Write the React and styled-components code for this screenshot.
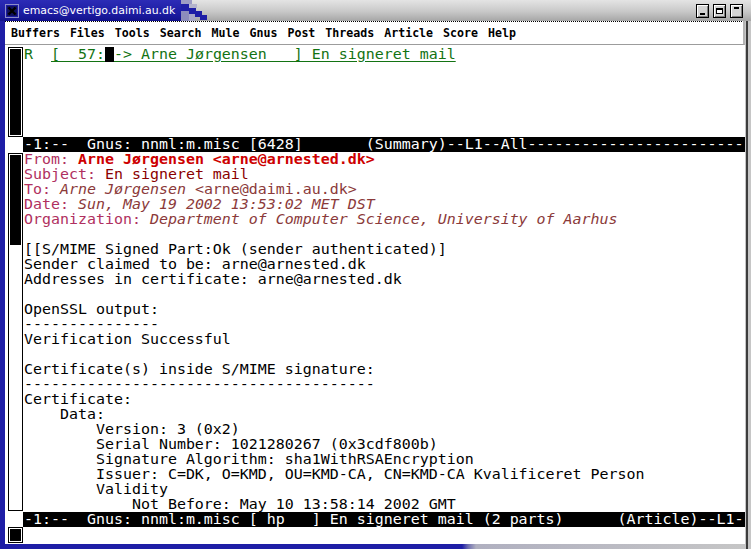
import React from "react";
import styled, { createGlobalStyle } from "styled-components";

// fonts used across the emacs frame
const MONO = `"DejaVu Sans Mono", "Liberation Mono", monospace`;

const GlobalStyle = createGlobalStyle`
  html, body {
    margin: 0;
    padding: 0;
    background: #fff;
  }
  body {
    width: 751px;
    height: 549px;
    overflow: hidden;
  }
`;

// window manager frame
const Frame = styled.div`
  width: 751px;
  height: 549px;
  display: flex;
  flex-direction: column;
  overflow: hidden;
  background:
    linear-gradient(to right, transparent 746px, #3c3c3c 746px, #3c3c3c 748px, transparent 748px),
    linear-gradient(to right, #1e1ea6 0, #1e1ea6 462px, #6c6cb0 468px, #b0b0c0 476px, #c6c6c6 100%);
`;

const TitleBar = styled.div`
  height: 21px;
  flex-shrink: 0;
  display: flex;
  align-items: stretch;
  background: linear-gradient(#e4e4e4, #c8c8c8 55%, #a6a6a6);
`;

const TitleBlue = styled.div`
  width: 181px;
  flex-shrink: 0;
  display: flex;
  align-items: center;
  background: linear-gradient(#2c2cb6, #1c1ca2 65%, #12128c);
`;

const CloseBox = styled.svg`
  margin-left: 5px;
  flex-shrink: 0;
`;

const TitleText = styled.span`
  margin-left: 4px;
  color: #fff;
  font-family: "DejaVu Sans", sans-serif;
  font-size: 10.9px;
  white-space: nowrap;
`;

const Dither = styled.svg`
  flex-shrink: 0;
`;

const TitleButtons = styled.div`
  margin-left: auto;
  margin-right: 8px;
  display: flex;
  align-items: center;
  gap: 4px;
`;

const TitleButton = styled.div`
  width: 13px;
  height: 14px;
  box-sizing: border-box;
  border: 1px solid #000;
  background: #d4d4d4;
  box-shadow: inset 1px 1px 0 #fff, inset -1px -1px 0 #808080;
  display: flex;
  justify-content: center;
  align-items: ${(p) => p.$align || "center"};
  padding: 2px 0;
`;

const Mark = styled.div`
  width: ${(p) => p.$w}px;
  height: ${(p) => p.$h}px;
  background: #000;
  box-sizing: border-box;
  ${(p) => p.$hollow && "background: #fff; border: 1px solid #000; border-top-width: 2px;"}
`;

// the emacs client area
const Client = styled.div`
  flex: 1;
  min-height: 0;
  margin: 0 6px 5px 5px;
  background: #fff;
  display: flex;
  flex-direction: column;
`;

const MenuBar = styled.div`
  height: 24px;
  flex-shrink: 0;
  box-sizing: border-box;
  display: flex;
  align-items: center;
  gap: 10px;
  padding: 1px 0 0 6px;
  border-bottom: 1px solid #9c9c9c;
  border-right: 2px solid #b4b4b4;
  background:
    repeating-linear-gradient(to right, #000 0 1px, #fff 1px 2px) top left / 100% 1px no-repeat,
    #fff;
  font-family: ${MONO};
  font-weight: bold;
  font-size: 11.6px;
  color: #000;
`;

const Pane = styled.div`
  height: ${(p) => p.$h}px;
  flex-shrink: 0;
  display: grid;
  grid-template-columns: 18px 1fr;
  overflow: hidden;
`;

const Scroll = styled.div`
  margin: ${(p) => p.$top || 0}px 0 0 3px;
  width: 15px;
  height: ${(p) => p.$h}px;
  box-sizing: border-box;
  border: 1px solid #000;
  padding: 1px;
  display: flex;
  flex-direction: column;
`;

const Thumb = styled.div`
  background: #000;
  height: ${(p) => (p.$h ? `${p.$h}px` : "100%")};
`;

const Text = styled.div`
  padding: ${(p) => p.$top || 0}px 0 0 1px;
  font-family: ${MONO};
  font-size: 14.95px;
  line-height: 15px;
  color: #000;
  white-space: pre;
  overflow: hidden;
`;

const Line = styled.div`
  height: 15px;
`;

const ModeLine = styled.div`
  height: 15px;
  flex-shrink: 0;
  margin-left: 18px;
  padding-left: 1px;
  background: #000;
  color: #fff;
  font-family: ${MONO};
  font-size: 14.95px;
  line-height: 15px;
  white-space: pre;
  overflow: hidden;
`;

const Green = styled.span`
  color: #137313;
`;

const Selected = styled.span`
  color: #137313;
  text-decoration: underline;
  text-decoration-color: #137313;
  text-underline-offset: 2px;
`;

const Cursor = styled.span`
  display: inline-block;
  width: 9px;
  height: 15px;
  background: #000;
  vertical-align: top;
`;

const HeaderName = styled.span`
  color: #b03060;
`;

const HeaderValue = styled.span`
  color: ${(p) => p.$color || "#8b3a3a"};
  font-weight: ${(p) => (p.$bold ? "bold" : "normal")};
  font-style: ${(p) => (p.$italic ? "italic" : "normal")};
`;

const menus = ["Buffers", "Files", "Tools", "Search", "Mule", "Gnus", "Post", "Threads", "Article", "Score", "Help"];

const summaryMode = "-1:--  Gnus: nnml:m.misc [6428]       (Summary)--L1--All" + "-".repeat(24);
const articleMode = "-1:--  Gnus: nnml:m.misc [ hp   ] En signeret mail (2 parts)      (Article)--L1-";

const body = [
  "",
  "[[S/MIME Signed Part:Ok (sender authenticated)]",
  "Sender claimed to be: arne@arnested.dk",
  "Addresses in certificate: arne@arnested.dk",
  "",
  "OpenSSL output:",
  "-".repeat(15),
  "Verification Successful",
  "",
  "Certificate(s) inside S/MIME signature:",
  "-".repeat(39),
  "Certificate:",
  "    Data:",
  "        Version: 3 (0x2)",
  "        Serial Number: 1021280267 (0x3cdf800b)",
  "        Signature Algorithm: sha1WithRSAEncryption",
  "        Issuer: C=DK, O=KMD, OU=KMD-CA, CN=KMD-CA Kvalificeret Person",
  "        Validity",
  "            Not Before: May 10 13:58:14 2002 GMT",
];

const App = () => {
  return (
    <>
      <GlobalStyle />
      <Frame>
        <TitleBar>
          <TitleBlue>
            <CloseBox width="14" height="14" viewBox="0 0 14 14">
              <rect x="0.5" y="0.5" width="13" height="13" fill="#1c1ca2" stroke="#8c8cc8" />
              <rect x="2" y="2" width="10" height="10" fill="#101060" />
              <path d="M3.5 3.5 L10.5 10.5 M10.5 3.5 L3.5 10.5" stroke="#000" strokeWidth="2.4" />
            </CloseBox>
            <TitleText>emacs@vertigo.daimi.au.dk</TitleText>
          </TitleBlue>
          <Dither width="32" height="21" viewBox="0 0 32 21">
            <rect x="0" y="0" width="11" height="4" fill="#9c9cc4" />
            <rect x="0" y="4" width="8" height="7" fill="#1e1ea6" />
            <rect x="8" y="4" width="8" height="4" fill="#b4b4cc" />
            <rect x="8" y="8" width="7" height="6" fill="#1e1ea6" />
            <rect x="0" y="11" width="8" height="10" fill="#8c8cbc" />
            <rect x="14" y="11" width="7" height="6" fill="#1e1ea6" />
            <rect x="19" y="15" width="7" height="5" fill="#1e1ea6" />
            <rect x="8" y="14" width="6" height="7" fill="#a8a8c8" />
          </Dither>
          <TitleButtons>
            <TitleButton $align="flex-end">
              <Mark $w={5} $h={2} />
            </TitleButton>
            <TitleButton>
              <Mark $w={7} $h={6} $hollow />
            </TitleButton>
            <TitleButton $align="flex-start">
              <Mark $w={5} $h={2} />
            </TitleButton>
          </TitleButtons>
        </TitleBar>

        <Client>
          <MenuBar>
            {menus.map((m) => (
              <span key={m}>{m}</span>
            ))}
          </MenuBar>

          <Pane $h={92}>
            <Scroll $top={2} $h={90}>
              <Thumb />
            </Scroll>
            <Text $top={2}>
              <Line>
                <Green>R  </Green>
                <Selected>
                  [  57:<Cursor />-&gt; Arne Jørgensen   ] En signeret mail
                </Selected>
              </Line>
            </Text>
          </Pane>

          <ModeLine>{summaryMode}</ModeLine>

          <Pane $h={360}>
            <Scroll $top={1} $h={358}>
              <Thumb $h={90} />
            </Scroll>
            <Text>
              <Line>
                <HeaderName>From: </HeaderName>
                <HeaderValue $color="#cd0000" $bold>
                  Arne Jørgensen &lt;arne@arnested.dk&gt;
                </HeaderValue>
              </Line>
              <Line>
                <HeaderName>Subject: </HeaderName>
                <HeaderValue $color="#8b0000">En signeret mail</HeaderValue>
              </Line>
              <Line>
                <HeaderName>To: </HeaderName>
                <HeaderValue $italic>Arne Jørgensen &lt;</HeaderValue>
                <HeaderValue>arne@daimi.au.dk</HeaderValue>
                <HeaderValue $italic>&gt;</HeaderValue>
              </Line>
              <Line>
                <HeaderName>Date: </HeaderName>
                <HeaderValue $italic>Sun, May 19 2002 13:53:02 MET DST</HeaderValue>
              </Line>
              <Line>
                <HeaderName>Organization: </HeaderName>
                <HeaderValue $italic>Department of Computer Science, University of Aarhus</HeaderValue>
              </Line>
              {body.map((l, i) => (
                <Line key={i}>{l}</Line>
              ))}
            </Text>
          </Pane>

          <ModeLine>{articleMode}</ModeLine>

          <Pane $h={17}>
            <Scroll $h={16}>
              <Thumb />
            </Scroll>
            <Text />
          </Pane>
        </Client>
      </Frame>
    </>
  );
};

export default App;
